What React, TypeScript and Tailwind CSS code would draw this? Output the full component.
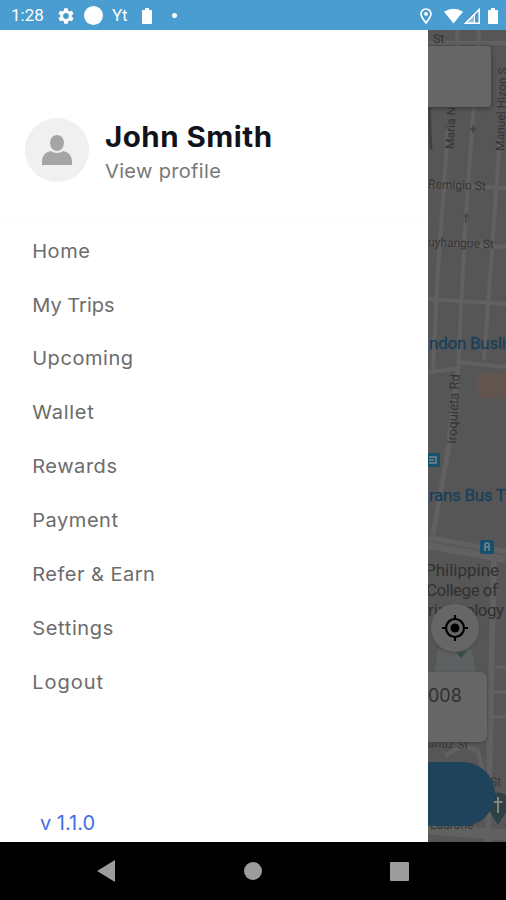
const menuItems = [
  { label: "Home", tracking: "tracking-[0.5px]" },
  { label: "My Trips", tracking: "tracking-[0px]" },
  { label: "Upcoming", tracking: "tracking-[0.5px]" },
  { label: "Wallet", tracking: "tracking-[0.7px]" },
  { label: "Rewards", tracking: "tracking-[0.5px]" },
  { label: "Payment", tracking: "tracking-[0.5px]" },
  { label: "Refer & Earn", tracking: "tracking-[0.45px]" },
  { label: "Settings", tracking: "tracking-[0.6px]" },
  { label: "Logout", tracking: "tracking-[0.9px]" },
];

function BatteryIcon({ className }: { className: string }) {
  return (
    <svg viewBox="0 0 10 16" className={className} fill="white">
      <path d="M3 0h4v2h2q1 0 1 1v12q0 1-1 1H1q-1 0-1-1V3q0-1 1-1h2z" />
    </svg>
  );
}

function StatusBar() {
  return (
    <header className="flex h-[30px] shrink-0 items-center bg-[#4a9dd0] pt-px pr-2 pl-[11px] text-white">
      <span className="w-[47px] font-[Roboto] text-[17px] leading-none">1:28</span>
      <svg viewBox="2 2 20 20" className="size-4" fill="white">
        <path d="M19.14 12.94c.04-.3.06-.61.06-.94 0-.32-.02-.64-.07-.94l2.03-1.58a.49.49 0 0 0 .12-.61l-1.92-3.32a.49.49 0 0 0-.59-.22l-2.39.96c-.5-.38-1.03-.7-1.62-.94l-.36-2.54a.48.48 0 0 0-.48-.41h-3.84c-.24 0-.43.17-.47.41l-.36 2.54c-.59.24-1.13.57-1.62.94l-2.39-.96a.48.48 0 0 0-.59.22L2.74 8.87c-.12.21-.08.47.12.61l2.03 1.58c-.05.3-.09.63-.09.94s.02.64.07.94l-2.03 1.58a.49.49 0 0 0-.12.61l1.92 3.32c.12.22.37.29.59.22l2.39-.96c.5.38 1.03.7 1.62.94l.36 2.54c.05.24.24.41.48.41h3.84c.24 0 .44-.17.47-.41l.36-2.54c.59-.24 1.13-.56 1.62-.94l2.39.96c.22.08.47 0 .59-.22l1.92-3.32a.48.48 0 0 0-.12-.61zM12 15.6a3.6 3.6 0 1 1 0-7.2 3.6 3.6 0 0 1 0 7.2z" />
      </svg>
      <span className="ml-2.5 size-[19px] rounded-full bg-white" />
      <span className="ml-[9px] w-[30px] font-[Roboto] text-[17px] leading-none">Yt</span>
      <BatteryIcon className="h-4 w-2.5" />
      <span className="ml-5 size-[5px] rounded-full bg-white" />
      <div className="ml-auto flex items-center">
        <svg viewBox="0 0 12 16" className="mr-3 h-4 w-3" fill="none" stroke="white" strokeWidth="1.7">
          <path d="M6 15C3.5 11.7 1 8.6 1 6a5 5 0 0 1 10 0c0 2.6-2.5 5.7-5 9z" />
          <circle cx="6" cy="5.9" r="1.9" fill="white" stroke="none" />
        </svg>
        <svg viewBox="0 0 20 16" className="h-4 w-[19px]" fill="white">
          <path d="M0 3.5Q10-3 20 3.5L10 16z" />
        </svg>
        <svg viewBox="0 0 16 16" className="ml-px h-4 w-4" fill="none" stroke="white" strokeWidth="1.5">
          <path d="M1.5 15.2H15.2V1.5z" />
          <path d="M10.5 6v9M1.5 15.2 10.5 6v9z" fill="white" fillOpacity=".4" strokeWidth="1" />
        </svg>
        <BatteryIcon className="ml-2 h-4 w-2.5" />
      </div>
    </header>
  );
}

function StreetMap() {
  return (
    <svg viewBox="428 30 78 812" className="block h-[812px] w-[78px]" fontFamily="Roboto, sans-serif">
      <rect x="428" y="30" width="78" height="812" fill="#565656" />

      {/* roads */}
      <g fill="none" stroke="#616161" strokeWidth="4">
        <path d="M428 43H506M457 30V46M479 30V46" />
        <path d="M448 130 438 270 433 370M474 100 465 230 458 370M500 135 492 250 484 360" />
        <path d="M428 185 506 188M428 243 506 247M428 299 506 304M428 372 456 369M458 362 506 367" />
        <path d="M458 370 448 450 433 535" strokeWidth="5" />
        <path d="M428 542 506 556" strokeWidth="14" />
        <path d="M494 560 492 640 488 842" strokeWidth="6" />
        <path d="M488 667H506M488 692H506M488 717H506" strokeWidth="3" />
        <path d="M446 756q14-14 32-5l5 20" strokeWidth="4" />
        <path d="M428 829 506 835" strokeWidth="11" />
      </g>
      <path d="M428 541 506 555" stroke="#595959" strokeWidth="2" />
      <path d="M430 100Q429 120 431 150" fill="none" stroke="#414141" strokeWidth="3" />
      <rect x="477" y="373" width="31" height="25" rx="5" fill="#62554f" />
      <path d="M438 650h34l4 25h-42z" fill="#5d6161" />

      {/* street names */}
      <g fill="#343434" fontSize="12">
        <text x="433" y="43">St</text>
        <text transform="translate(454 149) rotate(-88)">Maria N</text>
        <text transform="translate(504 151) rotate(-88)">Manuel Hizon S</text>
        <text x="428" y="188" transform="rotate(2 428 188)">Remigio St</text>
        <text x="428" y="246" transform="rotate(2 428 246)">uyhangue St</text>
        <text transform="translate(456 444) rotate(-87)" fontSize="13">Iroquieta Rd</text>
        <text x="428" y="747" transform="rotate(3 428 747)">antiz St</text>
        <text x="430" y="829">Laurone</text>
      </g>
      <path d="M463 216h6m-3-3v10M473 133v-8m-3 4h6" fill="none" stroke="#434343" strokeWidth="1.5" />

      {/* transit stops */}
      <g fill="#173f5a" stroke="#173f5a" strokeWidth=".3" fontSize="17">
        <text x="429" y="349" textLength="77">ndon Busli</text>
        <text x="429" y="501" textLength="77">rans Bus T</text>
      </g>
      <g fill="#15516f">
        <rect x="427" y="453" width="13" height="14" rx="2" />
        <rect x="480" y="540" width="14" height="14" rx="2" />
      </g>
      <g fill="none" stroke="#7a878d" strokeWidth="1.5">
        <path d="M429 457h7v6h-7M429 460h5" />
        <path d="M485 551v-6q0-2 2-2t2 2v6M485 547h4" />
      </g>

      <g fill="#303030" fontSize="17">
        <text x="425" y="576">Philippine</text>
        <text x="426" y="596" textLength="72">College of</text>
        <text x="428" y="616">rin</text>
        <text x="465" y="616" textLength="39">ology</text>
      </g>
      <path d="M455 651h12l-6 7z" fill="#344c4c" />

      {/* church pin */}
      <path d="M498 825C493 816 488 811 488 803a10.500 10.500 0 0 1 21 0c0 8-6 13-11 22z" fill="#2e4042" />
      <path d="M498 797v16M493.5 802h9" stroke="#7d8585" strokeWidth="2" />
      <text x="490" y="786" fill="#393939" fontSize="12">St</text>
    </svg>
  );
}

function MapPanel() {
  return (
    <section className="relative h-full w-[78px] shrink-0 overflow-hidden">
      <StreetMap />
      <div className="absolute top-4 -left-4 h-[61px] w-[79px] rounded bg-[#666666] shadow-[0_1px_4px_#333333]" />
      <div className="absolute top-[574px] left-[3px] flex size-[48px] items-center justify-center rounded-full bg-[#666666] shadow-[0_1px_3px_#4a4a4a]">
        <svg viewBox="0 0 26 26" className="size-[26px]" fill="none" stroke="black" strokeWidth="2.2">
          <circle cx="13" cy="13" r="9" />
          <circle cx="13" cy="13" r="4.5" fill="black" stroke="none" />
          <path d="M13 0v4M13 22v4M0 13h4M22 13h4" />
        </svg>
      </div>
      <div className="absolute top-[642px] -left-4 h-[70px] w-[75px] rounded-md bg-[#666666] pt-[14px] pl-4 font-[Inter] text-[18px] leading-[20px] text-[#303030] shadow-[0_1px_3px_#414141]">
        008
      </div>
      <div className="absolute top-[732px] -left-10 h-[64px] w-[107px] rounded-full bg-[#20435c]" />
    </section>
  );
}

function Drawer() {
  return (
    <aside className="flex h-full w-[428px] shrink-0 flex-col bg-white font-[Inter]">
      <div className="flex h-[187px] items-center border-b border-[#fbfbfb] pt-[54px] pl-[25px]">
        <div className="flex size-16 items-center justify-center rounded-full bg-[#f0f0f0]">
          <svg viewBox="0 0 30 30" className="size-[30px]" fill="#a5a5a5">
            <ellipse cx="15" cy="8" rx="7" ry="8" />
            <path d="M0 30v-3c0-7 4-10 9-11 3 2.500 9 2.500 12 0 5 1 9 4 9 11v3z" />
          </svg>
        </div>
        <div className="ml-4 origin-left scale-x-[1.055] pt-1.5">
          <h1 className="text-[28px] leading-[36px] font-bold tracking-[0.45px] text-[#10131a]">John Smith</h1>
          <p className="mt-0.5 text-[19px] leading-[30px] tracking-[0.3px] text-[#787878]">View profile</p>
        </div>
      </div>
      <nav className="mt-2 flex origin-left scale-x-[1.055] flex-col pl-[30.5px]">
        {menuItems.map((item) => (
          <a key={item.label} className={`flex h-[53.9px] items-center text-[19px] text-[#6c6c6c] ${item.tracking}`}>
            {item.label}
          </a>
        ))}
      </nav>
      <p className="mt-auto mb-[7px] pl-10 text-[20px] leading-6 text-[#3f6fe0]">v 1.1.0</p>
    </aside>
  );
}

function NavigationBar() {
  return (
    <footer className="flex h-[58px] shrink-0 items-center justify-between bg-black px-[97px]">
      <svg viewBox="0 0 18 22" className="h-[22px] w-[18px]" fill="#9c9c9c">
        <path d="M0 11 18 0v22z" />
      </svg>
      <span className="size-[18px] rounded-full bg-[#9c9c9c]" />
      <span className="size-[19px] rounded-[1px] bg-[#9c9c9c]" />
    </footer>
  );
}

export default function App() {
  return (
    <main className="flex h-[900px] w-[506px] flex-col overflow-hidden bg-black">
      <StatusBar />
      <div className="flex h-[812px] shrink-0">
        <Drawer />
        <MapPanel />
      </div>
      <NavigationBar />
    </main>
  );
}
